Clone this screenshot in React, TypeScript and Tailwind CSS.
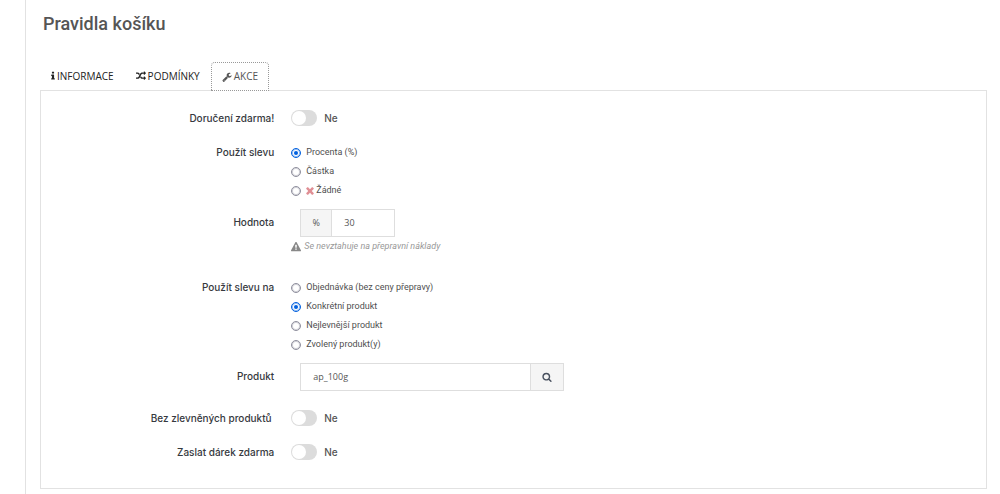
import React, { useState } from "react";

const icons = {
  info: "M1216 1344v128q0 26-19 45t-45 19h-512q-26 0-45-19t-19-45v-128q0-26 19-45t45-19h64v-384h-64q-26 0-45-19t-19-45v-128q0-26 19-45t45-19h384q26 0 45 19t19 45v576h64q26 0 45 19t19 45zm-128-1152v192q0 26-19 45t-45 19h-256q-26 0-45-19t-19-45v-192q0-26 19-45t45-19h256q26 0 45 19t19 45z",
  random:
    "M666 481q-60 92-137 273-22-45-37-72.5t-40.5-63.5-51-56.5-63-35-81.5-14.5h-224q-14 0-23-9t-9-23v-192q0-14 9-23t23-9h224q250 0 410 225zm1126 799q0 14-9 23l-320 320q-9 9-23 9-13 0-22.5-9.5t-9.5-22.5v-192q-32 0-85 .5t-81 1-73-1-71-5-64-10.5-63-18.5-58-28.5-59-40-55-53.5-56-69.5q59-93 136-273 22 45 37 72.5t40.5 63.5 51 56.5 63 35 81.5 14.5h256v-192q0-14 9-23t23-9q12 0 24 10l319 319q9 9 9 23zm0-896q0 14-9 23l-320 320q-9 9-23 9-13 0-22.5-9.5t-9.5-22.5v-192h-256q-48 0-87 15t-69 45-51 61.5-45 77.5q-32 62-78 171-29 66-49.5 111t-54 105-64 100-74 83-90 68.5-106.5 42-128 16.5h-224q-14 0-23-9t-9-23v-192q0-14 9-23t23-9h224q48 0 87-15t69-45 51-61.5 45-77.5q32-62 78-171 29-66 49.5-111t54-105 64-100 74-83 90-68.5 106.5-42 128-16.5h256v-192q0-14 9-23t23-9q12 0 24 10l319 319q9 9 9 23z",
  wrench:
    "M448 1472q0-26-19-45t-45-19-45 19-19 45 19 45 45 19 45-19 19-45zm644-420l-682 682q-37 37-90 37-52 0-91-37l-106-108q-38-36-38-90 0-53 38-91l681-681q39 98 114.5 173.5t173.5 114.5zm634-435q0 39-23 106-47 134-164.5 217.5t-258.5 83.5q-185 0-316.5-131.5t-131.5-316.5 131.5-316.5 316.5-131.5q58 0 121.5 16.5t107.5 46.5q16 11 16 28t-16 28l-293 169v224l193 107q5-3 79-48.5t135.5-81 70.5-35.5q15 0 23.5 10t8.5 25z",
  times:
    "M1490 1322q0 40-28 68l-136 136q-28 28-68 28t-68-28l-294-294-294 294q-28 28-68 28t-68-28l-136-136q-28-28-28-68t28-68l294-294-294-294q-28-28-28-68t28-68l136-136q28-28 68-28t68 28l294 294 294-294q28-28 68-28t68 28l136 136q28 28 28 68t-28 68l-294 294 294 294q28 28 28 68z",
  warning:
    "M1024 1375v-190q0-14-9.5-23.5t-22.5-9.5h-192q-13 0-22.5 9.5t-9.5 23.5v190q0 14 9.5 23.5t22.5 9.5h192q13 0 22.5-9.5t9.5-23.5zm-2-374l18-459q0-12-10-19-13-11-24-11h-220q-11 0-24 11-10 7-10 21l17 457q0 10 10 16.5t24 6.5h185q14 0 23.5-6.5t10.5-16.5zm-14-934l768 1408q35 63-2 126-17 29-46.5 46t-63.5 17h-1536q-34 0-63.5-17t-46.5-46q-37-63-2-126l768-1408q17-31 47-49t65-18 65 18 47 49z",
  search:
    "M1216 832q0-185-131.5-316.5t-316.5-131.5-316.5 131.5-131.5 316.5 131.5 316.5 316.5 131.5 316.5-131.5 131.5-316.5zm512 832q0 52-38 90t-90 38q-54 0-90-38l-343-342q-179 124-399 124-143 0-273.5-55.5t-225-150-150-225-55.5-273.5 55.5-273.5 150-225 225-150 273.5-55.5 273.5 55.5 225 150 150 225 55.5 273.5q0 220-124 399l343 343q37 37 37 90z",
};

function Icon({
  name,
  className,
  viewBox = "0 0 1792 1792",
}: {
  name: keyof typeof icons;
  className?: string;
  viewBox?: string;
}) {
  return (
    <svg viewBox={viewBox} fill="currentColor" className={className} aria-hidden="true">
      <path d={icons[name]} />
    </svg>
  );
}

function Row({
  label,
  htmlFor,
  id,
  tall,
  children,
}: {
  label: string;
  htmlFor?: string;
  id?: string;
  tall?: boolean;
  children?: any;
}) {
  const labelClass =
    "w-1/4 shrink-0 pr-[3px] text-right font-[Inter,sans-serif] text-[10px] font-medium text-[#36393e] " +
    (tall ? "leading-[26px]" : "leading-5");

  return (
    <div className="flex items-start">
      {htmlFor ? (
        <label htmlFor={htmlFor} className={labelClass}>
          {label}
        </label>
      ) : (
        <span id={id} className={labelClass}>
          {label}
        </span>
      )}
      <div className="min-w-0 flex-1 pl-[14px]">{children}</div>
    </div>
  );
}

function Switch({ id }: { id: string }) {
  const [on, setOn] = useState(false);
  return (
    <div className="flex h-5 items-center gap-[7px]">
      <input
        id={id}
        type="checkbox"
        role="switch"
        checked={on}
        onChange={() => setOn(!on)}
        className="flex h-4 w-[26px] appearance-none items-center rounded-full bg-[#dcdcdc] px-px before:size-[14px] before:rounded-full before:bg-white checked:justify-end checked:bg-[#72c279]"
      />
      <span className="font-[Inter,sans-serif] text-[10px] font-medium text-[#555]">
        {on ? "Ano" : "Ne"}
      </span>
    </div>
  );
}

function RadioGroup({
  name,
  labelledBy,
  initial,
  options,
}: {
  name: string;
  labelledBy: string;
  initial: number;
  options: React.ReactNode[];
}) {
  const [value, setValue] = useState(initial);
  return (
    <div role="radiogroup" aria-labelledby={labelledBy} className="flex flex-col pt-px">
      {options.map((option, i) => (
        <label
          key={i}
          className="flex h-[19px] items-center gap-[5px] text-[9px] text-[#4f4f4f]"
        >
          <input
            type="radio"
            name={name}
            checked={value === i}
            onChange={() => setValue(i)}
            className="flex size-[10px] shrink-0 appearance-none items-center justify-center rounded-full border border-[#8f8f9d] bg-white ring-1 ring-[#8f8f9d]/40 ring-inset before:size-1 before:rounded-full checked:border-[#0060df] checked:ring-[#0060df]/40 checked:before:bg-[#0060df]"
          />
          {option}
        </label>
      ))}
    </div>
  );
}

const tabs: { title: string; icon: keyof typeof icons; viewBox?: string; iconClass: string }[] = [
  { title: "INFORMACE", icon: "info", viewBox: "576 0 640 1792", iconClass: "h-[10px] w-1" },
  { title: "PODMÍNKY", icon: "random", iconClass: "size-[10px]" },
  { title: "AKCE", icon: "wrench", iconClass: "size-[10px]" },
];

function App() {
  const [tab, setTab] = useState(2);

  return (
    <div className="min-h-screen bg-white pl-[25px] font-[Roboto,sans-serif]">
      <main className="min-h-screen border-l border-[#e2e2e2] pr-[13px] pl-[14px]">
        <h1 className="pt-3 pl-[3px] text-lg leading-6 font-medium text-[#555]">
          Pravidla košíku
        </h1>

        <div role="tablist" className="flex pt-[26px] font-['Open_Sans',sans-serif]">
          {tabs.map((t, i) => (
            <button
              key={t.title}
              type="button"
              role="tab"
              aria-selected={tab === i}
              onClick={() => setTab(i)}
              className={
                tab === i
                  ? "relative -mb-px flex h-[29px] items-center gap-[2px] rounded-t-sm border border-dotted border-[#999] bg-white px-[10px] text-[10px] text-[#555]"
                  : "flex h-7 items-center gap-[2px] border border-transparent px-[10px] text-[10px] text-[#222]"
              }
            >
              <Icon name={t.icon} viewBox={t.viewBox} className={t.iconClass} />
              {t.title}
            </button>
          ))}
        </div>

        <form
          className="border border-[#e2e2e2] pt-[17px] pb-[26px]"
          onSubmit={(e) => e.preventDefault()}
        >
          <Row label="Doručení zdarma!" htmlFor="free-shipping">
            <Switch id="free-shipping" />
          </Row>

          <div className="pt-[14px]">
            <Row label="Použít slevu" id="discount-type">
              <RadioGroup
                name="discount-type"
                labelledBy="discount-type"
                initial={0}
                options={[
                  "Procenta (%)",
                  "Částka",
                  <span className="flex items-center gap-[2px]">
                    <Icon name="times" viewBox="276 340 1240 1240" className="size-2 text-[#e08f95]" />
                    Žádné
                  </span>,
                ]}
              />
            </Row>
          </div>

          <div className="pt-[9px]">
            <Row label="Hodnota" htmlFor="amount" tall>
              <div className="ml-[9px] flex h-7 w-[95px] border border-[#dedede] font-['Open_Sans',sans-serif] text-[9px] text-[#555]">
                <span className="flex w-[31px] items-center justify-center border-r border-[#dedede] bg-[#f5f5f5]">
                  %
                </span>
                <input
                  id="amount"
                  type="text"
                  defaultValue="30"
                  className="min-w-0 flex-1 bg-white px-3"
                />
              </div>
              <p className="flex h-5 items-center gap-[3px] text-[9px] text-[#999] italic">
                <Icon name="warning" className="size-[10px] text-[#888]" />
                Se nevztahuje na přepravní náklady
              </p>
            </Row>
          </div>

          <div className="pt-5">
            <Row label="Použít slevu na" id="discount-target">
              <RadioGroup
                name="discount-target"
                labelledBy="discount-target"
                initial={1}
                options={[
                  "Objednávka (bez ceny přepravy)",
                  "Konkrétní produkt",
                  "Nejlevnější produkt",
                  "Zvolený produkt(y)",
                ]}
              />
            </Row>
          </div>

          <div className="pt-[9px]">
            <Row label="Produkt" htmlFor="product" tall>
              <div className="ml-[9px] flex h-7 max-w-[264px] border border-[#dedede] text-[#555]">
                <input
                  id="product"
                  type="text"
                  defaultValue="ap_100g"
                  className="min-w-0 flex-1 bg-white px-3 font-['Open_Sans',sans-serif] text-[9px]"
                />
                <button
                  type="submit"
                  aria-label="Hledat"
                  className="flex w-[33px] items-center justify-center border-l border-[#dedede] bg-[#f5f5f5]"
                >
                  <Icon name="search" className="size-[10px] text-[#4a5260]" />
                </button>
              </div>
            </Row>
          </div>

          <div className="flex flex-col gap-[14px] pt-[17px]">
            <Row label={"Bez zlevněných produktů\u00a0"} htmlFor="exclude-special">
              <Switch id="exclude-special" />
            </Row>
            <Row label="Zaslat dárek zdarma" htmlFor="free-gift">
              <Switch id="free-gift" />
            </Row>
          </div>
        </form>
      </main>
    </div>
  );
}

export default App;
